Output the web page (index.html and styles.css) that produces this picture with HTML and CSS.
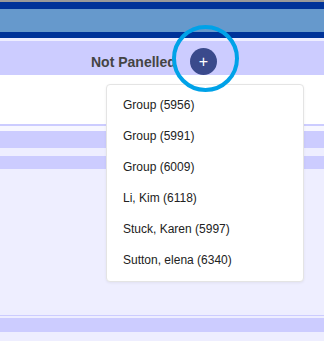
FILE: index.html
```html
<!DOCTYPE html>
<html lang="en">
<head>
    <meta charset="UTF-8">
    <title>Not Panelled</title>
    <link rel="stylesheet" href="styles.css">
</head>
<body>
    <div class="topbar">
        <div class="topbar-inner"></div>
    </div>

    <div class="title-bar">
        <span class="title">Not Panelled</span>
        <button class="add-btn">+</button>
        <div class="highlight"></div>

        <ul class="dropdown">
            <li>Group (5956)</li>
            <li>Group (5991)</li>
            <li>Group (6009)</li>
            <li>Li, Kim (6118)</li>
            <li>Stuck, Karen (5997)</li>
            <li>Sutton, elena (6340)</li>
        </ul>
    </div>

    <div class="blank"></div>
    <div class="rule"></div>
    <div class="spacer"></div>
    <div class="band band-tall"></div>
    <div class="gap"></div>
    <div class="band band-short"></div>
    <div class="panel"></div>
    <div class="rule rule-thin"></div>
    <div class="gap gap-small"></div>
    <div class="band band-foot"></div>
    <div class="rest"></div>
</body>
</html>
```

FILE: styles.css
```css
body {
    margin: 0;
    font-family: Arial, "Liberation Sans", sans-serif;
    background-color: #eeeeff;
}
.topbar {
    border-top: 2px solid #9a9a9a;
    background-color: #003399;
    padding: 7px 0 6px;
}
.topbar-inner {
    height: 23px;
    background-color: #6699cc;
}
.title-bar {
    position: relative;
    margin-top: 3px;
    height: 34px;
    background-color: #ccccff;
    display: flex;
    align-items: center;
    padding: 7px 0 0 91px;
    box-sizing: border-box;
}
.title {
    font-size: 14px;
    font-weight: bold;
    color: #444;
}
.add-btn {
    margin-left: 14px;
    width: 27px;
    height: 27px;
    border-radius: 50%;
    border: none;
    background-color: #3a4a8c;
    color: white;
    font-size: 16px;
    line-height: 27px;
    padding: 0;
    font-family: Arial, "Liberation Sans", sans-serif;
}
.highlight {
    position: absolute;
    left: 172px;
    top: -16px;
    width: 59px;
    height: 59px;
    border: 4.5px solid #00a2e8;
    border-radius: 50%;
    z-index: 3;
}
.dropdown {
    position: absolute;
    left: 106px;
    top: 43px;
    width: 198px;
    margin: 0;
    padding: 5px 0;
    list-style: none;
    background: white;
    border: 1px solid #e4e4e4;
    border-radius: 4px;
    box-shadow: 0 1px 3px rgba(0,0,0,0.06);
    box-sizing: border-box;
    z-index: 2;
}
.dropdown li {
    height: 31px;
    line-height: 31px;
    padding-left: 16px;
    font-size: 12px;
    color: #222;
}
.blank {
    height: 49px;
    background: white;
}
.rule {
    height: 2px;
    background-color: #ccccff;
}
.rule-thin {
    height: 1px;
}
.spacer {
    height: 5px;
    background: #f7f7ff;
}
.band {
    background-color: #ccccff;
}
.band-tall {
    height: 17px;
}
.band-short {
    height: 13px;
}
.band-foot {
    height: 14px;
}
.gap {
    height: 8px;
}
.gap-small {
    height: 2px;
}
.panel {
    height: 146px;
}
.rest {
    height: 10px;
}
```
